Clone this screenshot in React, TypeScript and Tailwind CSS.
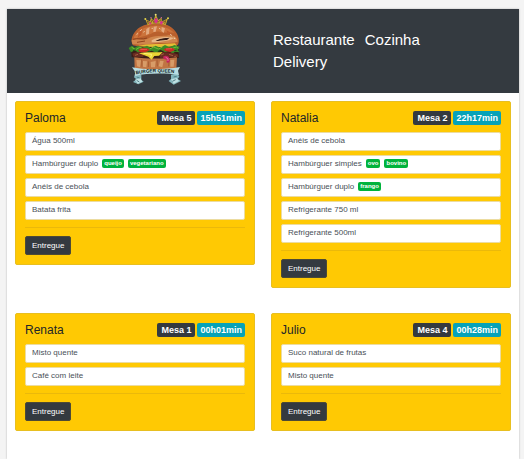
import React from "react";

type Item = { name: string; extras?: string[] };
type Order = { client: string; table: number; time: string; items: Item[] };

const orders: Order[] = [
  {
    client: "Paloma",
    table: 5,
    time: "15h51min",
    items: [
      { name: "Água 500ml" },
      { name: "Hambúrguer duplo", extras: ["queijo", "vegetariano"] },
      { name: "Anéis de cebola" },
      { name: "Batata frita" },
    ],
  },
  {
    client: "Natalia",
    table: 2,
    time: "22h17min",
    items: [
      { name: "Anéis de cebola" },
      { name: "Hambúrguer simples", extras: ["ovo", "bovino"] },
      { name: "Hambúrguer duplo", extras: ["frango"] },
      { name: "Refrigerante 750 ml" },
      { name: "Refrigerante 500ml" },
    ],
  },
  {
    client: "Renata",
    table: 1,
    time: "00h01min",
    items: [{ name: "Misto quente" }, { name: "Café com leite" }],
  },
  {
    client: "Julio",
    table: 4,
    time: "00h28min",
    items: [{ name: "Suco natural de frutas" }, { name: "Misto quente" }],
  },
];

function Logo() {
  return (
    <svg viewBox="51 24 162 216" className="h-[72px] w-[54px]" role="img" aria-label="Burger Queen">
      {/* top bun */}
      <path d="M62 112C60 98 68 78 88 66C104 57 124 54 142 55C168 56 188 68 198 86C204 97 206 112 200 120C170 125 150 118 120 120C98 122 76 126 66 121Z" fill="#b9602d" />
      <path d="M68 100C72 82 90 70 112 65C138 58 170 64 190 84C174 80 160 86 146 80C130 76 118 90 104 92C92 94 80 100 68 100Z" fill="#cc743c" />
      <path d="M106 72L116 66L114 86L105 90ZM128 65L138 64L134 80L127 81ZM152 66L162 70L158 84L151 78Z" fill="#e3aa80" />
      <path d="M84 82L95 72L91 90L80 98ZM166 76L176 81L181 92L170 86Z" fill="#c05c2c" />
      <path d="M62 106C78 98 92 108 110 101C128 90 156 95 172 91C188 90 198 96 200 110C176 117 138 110 112 118C88 120 74 119 64 118Z" fill="#d0854c" />
      <path d="M122 106C140 96 168 94 190 99C180 106 150 112 122 112Z" fill="#e8b78a" />
      <path d="M134 108C142 101 160 99 176 98L168 105C154 104 146 108 134 108Z" fill="#351c16" />
      <path d="M66 103C82 98 94 105 108 99M78 112L102 108" stroke="#8f421e" strokeWidth="3" fill="none" />
      <path d="M88 77l4-3M77 88l3-2M122 70h3M145 70l3 2M178 88l4 3M190 98l2 4M98 82l2-3" stroke="#fbe7cf" strokeWidth="3" />
      {/* crown */}
      <path d="M110 61L103 43L117 49L120 38L128 46L134 28L142 45L151 38L154 49L171 40L164 61C148 54 126 54 110 61Z" fill="#c7a72f" />
      <path d="M112 57L109 48L119 54L124 44L129 53L135 39L141 52L149 44L152 54L164 47L161 57" fill="none" stroke="#5b3b23" strokeWidth="2" />
      <path d="M115 50l7 5l-6 5zM130 44l6-6l5 9l-5 9l-6-5zM149 48l8 2l-5 9l-6-4z" fill="#d9308f" />
      <circle cx="103" cy="42" r="3" fill="#e8d648" />
      <circle cx="134" cy="29" r="3" fill="#eee17a" />
      <circle cx="171" cy="40" r="3" fill="#e8d648" />
      <circle cx="120" cy="38" r="2" fill="#e26aa8" />
      <circle cx="151" cy="38" r="2" fill="#e26aa8" />
      {/* fillings */}
      <path d="M60 130C90 120 176 122 202 130L204 158C168 166 92 162 62 156Z" fill="#3b1c15" />
      <path d="M78 124C112 114 158 119 192 115L198 122L160 127L108 125Z" fill="#e5bd34" />
      <path d="M53 129L63 122L71 128L81 122L93 128L108 122L120 129L134 122L148 128L162 120L176 127L190 120L206 125L200 135L206 142L192 140L184 146L174 137L162 142L148 134L136 144L122 137L109 142L96 136L82 143L72 136L60 142Z" fill="#3c8b25" />
      <path d="M62 127L74 134L86 127L100 132M116 132L128 126L142 132L154 126M184 130L196 126L202 130" stroke="#76bd38" strokeWidth="3" fill="none" />
      <path d="M66 137l8-3M108 137l7 2M142 138l9 1M189 137l8-1" stroke="#154f1d" strokeWidth="3" />
      <path d="M82 137C84 127 112 127 116 136L103 142L87 141Z" fill="#c92b23" />
      <path d="M158 135C162 126 188 126 192 135L178 141L165 139Z" fill="#cb2925" />
      <path d="M88 134l20-1M165 132l18-1" stroke="#f27457" strokeWidth="2" />
      <path d="M64 146C78 139 94 142 104 144L96 156L68 155ZM144 145C162 139 184 142 200 148L203 155L148 159Z" fill="#682c21" />
      <path d="M150 150l9-4M174 148l12 4M72 151l9-3M190 155l6-2" stroke="#a55b40" strokeWidth="3" />
      {/* bottom bun */}
      <path d="M70 157C104 162 160 162 198 157L196 192L172 197L94 197L71 192Z" fill="#c07443" />
      <path d="M76 165L90 166L87 187L78 184ZM96 168L108 169L106 187L95 185ZM119 171L134 168L132 187L120 187ZM147 167L158 168L154 187L143 184ZM178 165L190 164L188 185L178 185Z" fill="#d89c68" />
      <path d="M92 163l1 22M113 169l-1 17M138 164l1 20M174 170l-1 14" stroke="#9c5229" strokeWidth="2" />
      <path d="M84 145C108 138 134 144 155 141L144 152L130 153L122 164L112 155Z" fill="#ead536" />
      <path d="M98 145L122 148L119 157" stroke="#fff276" strokeWidth="3" fill="none" />
      <path d="M156 155C164 149 174 153 176 161C179 171 171 176 166 171L168 164L158 162Z" fill="#c3235c" />
      <path d="M164 157l7 4v7" stroke="#ed739c" strokeWidth="3" fill="none" />
      {/* ribbon */}
      <path d="M72 206L91 210L91 224L98 230L82 238L66 231L76 223L69 217ZM199 205L180 209L180 222L173 228L188 239L210 228L200 222L205 215Z" fill="#83b6bd" />
      <path d="M72 224L88 219L94 230L80 236ZM180 223L197 219L204 228L188 236Z" fill="#bfe1e3" />
      <path d="M77 226l8 5M184 229l10-5M77 216l9 3M188 216l9-2" stroke="#517e87" strokeWidth="3" />
      <path d="M63 187C102 195 164 194 207 186L201 197L204 210C164 204 108 204 73 213L71 198Z" fill="#b8dde2" />
      <path id="ribbon-line" d="M75 208C112 200 160 200 200 206" fill="none" />
      <text fill="#101c20" className="font-['Liberation_Sans'] text-[14px] font-bold">
        <textPath href="#ribbon-line">BURGER QUEEN</textPath>
      </text>
    </svg>
  );
}

function OrderCard({ order }: { order: Order }) {
  return (
    <article className="rounded-xs border border-[#e8bf20] bg-[#ffc903] p-[9px]">
      <header className="mb-[7px] flex h-3.5 items-center justify-between">
        <h2 className="text-[12px] leading-3.5 text-[#212529]">{order.client}</h2>
        <div className="flex gap-0.5 text-[9px] leading-3.5 font-bold text-white">
          <span className="rounded-xs bg-[#343a40] px-1">Mesa {order.table}</span>
          <span className="rounded-xs bg-[#06a2b8] px-[3px]">{order.time}</span>
        </div>
      </header>
      <ul className="flex flex-col gap-1">
        {order.items.map((item) => (
          <li
            key={item.name}
            className="flex h-[19px] items-center gap-1 rounded-xs border border-[#ecdca0] bg-white px-1.5 pb-0.5 text-[8px] leading-4 text-[#495057]"
          >
            {item.name}
            {item.extras?.map((extra) => (
              <span
                key={extra}
                className="rounded-xs bg-[#00b33c] px-0.5 text-[6px] leading-[9px] font-bold text-white"
              >
                {extra}
              </span>
            ))}
          </li>
        ))}
      </ul>
      <hr className="mt-[7px] mb-2 border-[#ebb90a]" />
      <button
        type="button"
        className="block h-[19px] rounded-xs border border-[#4d4a35] bg-[#343a40] px-1.5 text-[8px] leading-4 text-white"
      >
        Entregue
      </button>
    </article>
  );
}

export default function App() {
  return (
    <div className="min-h-screen bg-[#f4f4f4] pt-[9px] pr-[5px] pl-[7px] font-['Liberation_Sans',Arial,sans-serif]">
      <div className="min-h-[calc(100vh-9px)] bg-white shadow-[0_0_2px_rgba(0,0,0,0.25)]">
        <header className="grid grid-cols-2 items-center bg-[#343a40] pt-1 pb-2">
          <div className="flex justify-center pl-10">
            <Logo />
          </div>
          <nav className="flex max-w-44 flex-wrap gap-x-2.5 pt-1 pl-2.5 text-[15px] leading-[22px] text-white">
            <a href="#restaurante">Restaurante</a>
            <a href="#cozinha">Cozinha</a>
            <a href="#delivery">Delivery</a>
          </nav>
        </header>
        <main className="grid grid-cols-2 items-start gap-x-4 gap-y-[25px] px-2 pt-2">
          {orders.map((order) => (
            <OrderCard key={order.client} order={order} />
          ))}
        </main>
      </div>
    </div>
  );
}
